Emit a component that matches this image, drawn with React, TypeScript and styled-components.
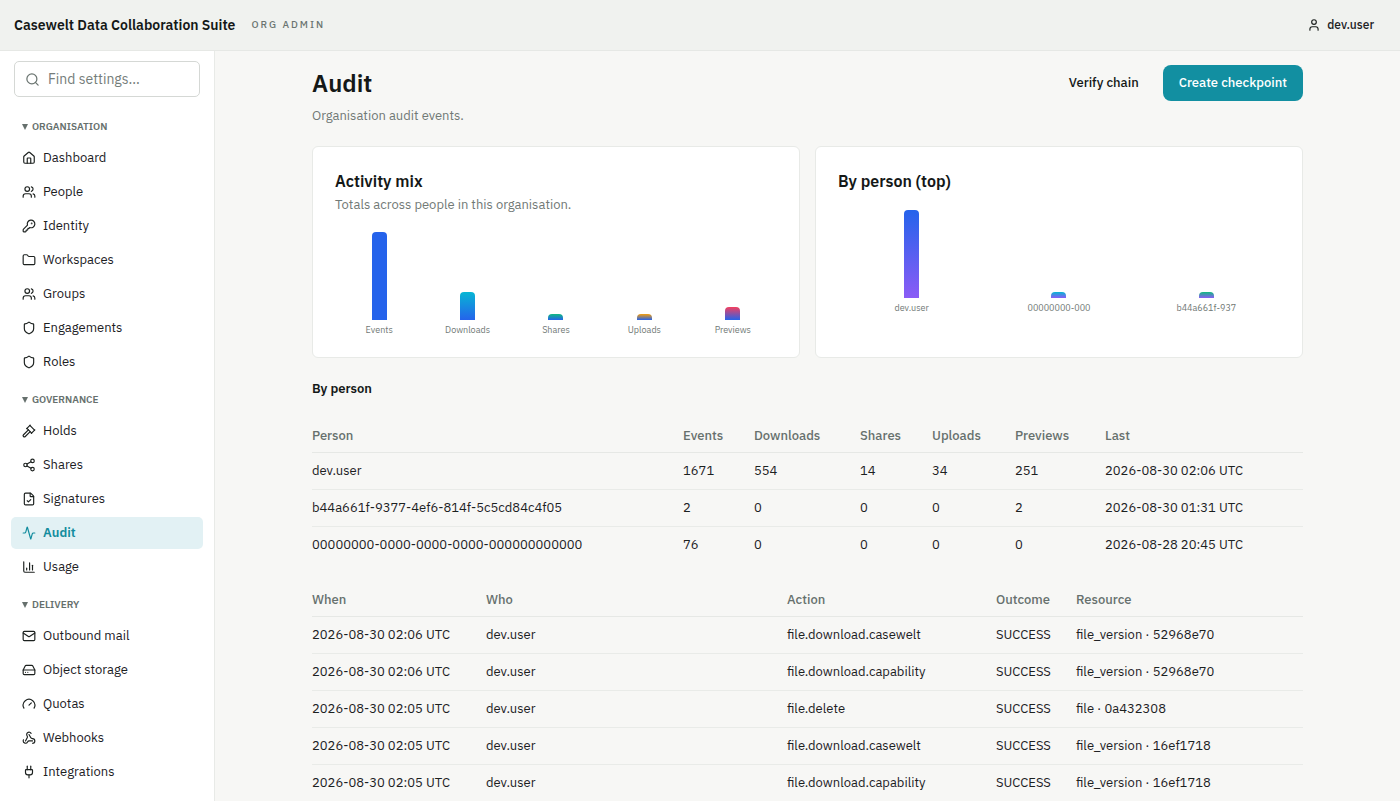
import {
  Activity,
  ChartColumn,
  FileCheck,
  Folder,
  Gauge,
  Gavel,
  HardDrive,
  House,
  KeyRound,
  Mail,
  Plug,
  Search,
  Share2,
  Shield,
  User,
  Users,
  Webhook,
  type LucideIcon,
} from "lucide-react";
import styled, { createGlobalStyle } from "styled-components";

const GlobalStyle = createGlobalStyle`
  * {
    box-sizing: border-box;
  }

  body {
    margin: 0;
    background-color: #f7f7f5;
    color: #1c211f;
    font-family: "IBM Plex Sans", Inter, "Liberation Sans", sans-serif;
    font-size: 13px;
    line-height: 20px;
  }
`;

const Page = styled.div`
  display: flex;
  flex-direction: column;
  height: 100vh;
  overflow: hidden;
`;

const TopBar = styled.header`
  flex: none;
  display: flex;
  justify-content: space-between;
  align-items: center;
  height: 51px;
  padding: 0 26px 0 14px;
  background-color: #f0f2ef;
  border-bottom: 1px solid #e6e8e5;
`;

const Brand = styled.div`
  display: flex;
  align-items: center;
  gap: 16px;
`;

const BrandName = styled.span`
  font-size: 14px;
  font-weight: 600;
  color: #141817;
`;

const BrandRole = styled.span`
  font-size: 10px;
  font-weight: 500;
  letter-spacing: 2px;
  text-transform: uppercase;
  color: #6b7571;
`;

const UserButton = styled.button`
  display: flex;
  align-items: center;
  gap: 6px;
  padding: 0;
  border: 0;
  background: none;
  color: #1c211f;
  font: inherit;
  font-size: 12px;
  font-weight: 500;
  cursor: pointer;
`;

const Body = styled.div`
  flex: 1;
  display: flex;
  min-height: 0;
`;

const Sidebar = styled.nav`
  flex: none;
  width: 215px;
  padding: 10px 11px;
  overflow: hidden;
  background-color: #fff;
  border-right: 1px solid #e8eae7;
`;

const SearchBox = styled.label`
  display: flex;
  align-items: center;
  gap: 8px;
  height: 36px;
  margin: 0 3px 20px;
  padding: 0 10px;
  border: 1px solid #d5d8d5;
  border-radius: 5px;
  color: #6b7571;
`;

const SearchInput = styled.input`
  flex: 1;
  min-width: 0;
  padding: 0;
  border: 0;
  outline: 0;
  background: none;
  font: inherit;
  font-size: 14px;
  color: #1c211f;

  &::placeholder {
    color: #757d7a;
    opacity: 1;
  }
`;

const Group = styled.details`
  margin-bottom: 12px;
`;

const GroupTitle = styled.summary`
  display: flex;
  align-items: center;
  gap: 4px;
  height: 20px;
  margin-bottom: 5px;
  padding: 0 11px;
  list-style: none;
  font-size: 10px;
  font-weight: 600;
  text-transform: uppercase;
  color: #66706d;
  cursor: pointer;

  &::before {
    content: "";
    border: 3px solid transparent;
    border-top: 6px solid #66706d;
    border-bottom: 0;
  }
`;

const GroupItems = styled.div`
  display: flex;
  flex-direction: column;
  gap: 2px;
`;

const NavItem = styled.a<{ $active?: boolean }>`
  display: flex;
  align-items: center;
  gap: 7px;
  height: 32px;
  padding: 0 11px;
  border-radius: 5px;
  background-color: ${({ $active }) => ($active ? "#e2f1f4" : "transparent")};
  color: ${({ $active }) => ($active ? "#128c9e" : "#1c211f")};
  font-weight: ${({ $active }) => ($active ? 600 : 400)};
  text-decoration: none;
`;

const Main = styled.main`
  flex: 1;
  min-width: 0;
  padding: 14px 24px 0;
  overflow: hidden;
`;

const Content = styled.div`
  max-width: 991px;
  margin: 0 auto;
`;

const PageHeader = styled.div`
  display: flex;
  justify-content: space-between;
  align-items: flex-start;
  margin-bottom: 20px;
`;

const Title = styled.h1`
  margin: 3px 0 8px;
  font-size: 24px;
  font-weight: 600;
  line-height: 30px;
  color: #141817;
`;

const Muted = styled.p`
  margin: 0;
  color: #717976;
`;

const Actions = styled.div`
  display: flex;
  gap: 8px;
`;

const Button = styled.button<{ $primary?: boolean }>`
  height: 36px;
  padding: 0 16px;
  border: 0;
  border-radius: 8px;
  background-color: ${({ $primary }) => ($primary ? "#128fa1" : "transparent")};
  color: ${({ $primary }) => ($primary ? "#fff" : "#141817")};
  font: inherit;
  font-weight: 500;
  cursor: pointer;
`;

const Cards = styled.div`
  display: grid;
  grid-template-columns: 1fr 1fr;
  gap: 15px;
  margin-bottom: 21px;
`;

const Card = styled.section`
  padding: 22px 22px 21px;
  border: 1px solid #e8eae7;
  border-radius: 6px;
  background-color: #fff;
`;

const CardTitle = styled.h2`
  margin: 0 0 2px;
  font-size: 16px;
  font-weight: 600;
  line-height: 24px;
  color: #141817;
`;

const Chart = styled.div<{ $columns: number }>`
  display: grid;
  grid-template-columns: repeat(${({ $columns }) => $columns}, 1fr);
  margin-top: 17px;
`;

const ChartColumnBox = styled.div`
  display: flex;
  flex-direction: column;
  align-items: center;
`;

const BarTrack = styled.div`
  display: flex;
  align-items: flex-end;
  height: 88px;
`;

const Bar = styled.div<{ $from: string; $to: string }>`
  width: 15px;
  min-height: 6px;
  border-radius: 4px 4px 0 0;
  background: linear-gradient(${({ $from, $to }) => `${$from}, ${$to}`});
`;

const BarLabel = styled.span`
  margin-top: 4px;
  font-size: 9px;
  line-height: 12px;
  color: #717976;
`;

const SectionTitle = styled.h3`
  margin: 0 0 20px;
  font-size: 13px;
  font-weight: 600;
  line-height: 20px;
  color: #141817;
`;

const Table = styled.table`
  width: 100%;
  margin-bottom: 19px;
  border-collapse: separate;
  border-spacing: 0;
  table-layout: fixed;

  &:last-child {
    margin-bottom: 0;
  }
`;

const Th = styled.th<{ $width?: number }>`
  width: ${({ $width }) => ($width ? `${$width}px` : "auto")};
  height: 34px;
  padding: 0;
  border-bottom: 1px solid #e6e8e5;
  text-align: left;
  font-weight: 500;
  color: #66706d;
`;

const Td = styled.td<{ $line: boolean }>`
  height: 37px;
  padding: 0;
  border-bottom: 1px solid ${({ $line }) => ($line ? "#e9ebe8" : "transparent")};
  white-space: nowrap;
`;

const groups: { title: string; items: [string, LucideIcon][] }[] = [
  {
    title: "Organisation",
    items: [
      ["Dashboard", House],
      ["People", Users],
      ["Identity", KeyRound],
      ["Workspaces", Folder],
      ["Groups", Users],
      ["Engagements", Shield],
      ["Roles", Shield],
    ],
  },
  {
    title: "Governance",
    items: [
      ["Holds", Gavel],
      ["Shares", Share2],
      ["Signatures", FileCheck],
      ["Audit", Activity],
      ["Usage", ChartColumn],
    ],
  },
  {
    title: "Delivery",
    items: [
      ["Outbound mail", Mail],
      ["Object storage", HardDrive],
      ["Quotas", Gauge],
      ["Webhooks", Webhook],
      ["Integrations", Plug],
    ],
  },
];

interface Datum {
  label: string;
  value: number;
  color: string;
}

const activity: Datum[] = [
  { label: "Events", value: 1749, color: "#2563eb" },
  { label: "Downloads", value: 554, color: "#06b6d4" },
  { label: "Shares", value: 14, color: "#10b981" },
  { label: "Uploads", value: 34, color: "#f59e0b" },
  { label: "Previews", value: 253, color: "#f43f5e" },
];

const topPeople: Datum[] = [
  { label: "dev.user", value: 1671, color: "#2563eb" },
  { label: "00000000-000", value: 76, color: "#06b6d4" },
  { label: "b44a661f-937", value: 2, color: "#10b981" },
];

interface Column {
  name: string;
  width?: number;
}

const personColumns: Column[] = [
  { name: "Person" },
  { name: "Events", width: 71 },
  { name: "Downloads", width: 106 },
  { name: "Shares", width: 72 },
  { name: "Uploads", width: 83 },
  { name: "Previews", width: 90 },
  { name: "Last", width: 198 },
];

const personRows = [
  ["dev.user", "1671", "554", "14", "34", "251", "2026-08-30 02:06 UTC"],
  ["b44a661f-9377-4ef6-814f-5c5cd84c4f05", "2", "0", "0", "0", "2", "2026-08-30 01:31 UTC"],
  ["00000000-0000-0000-0000-000000000000", "76", "0", "0", "0", "0", "2026-08-28 20:45 UTC"],
];

const eventColumns: Column[] = [
  { name: "When", width: 174 },
  { name: "Who" },
  { name: "Action", width: 209 },
  { name: "Outcome", width: 80 },
  { name: "Resource", width: 227 },
];

const eventRows = [
  ["2026-08-30 02:06 UTC", "dev.user", "file.download.casewelt", "SUCCESS", "file_version · 52968e70"],
  ["2026-08-30 02:06 UTC", "dev.user", "file.download.capability", "SUCCESS", "file_version · 52968e70"],
  ["2026-08-30 02:05 UTC", "dev.user", "file.delete", "SUCCESS", "file · 0a432308"],
  ["2026-08-30 02:05 UTC", "dev.user", "file.download.casewelt", "SUCCESS", "file_version · 16ef1718"],
  ["2026-08-30 02:05 UTC", "dev.user", "file.download.capability", "SUCCESS", "file_version · 16ef1718"],
];

const BarChart: React.FC<{ data: Datum[]; base: string }> = ({ data, base }) => {
  const max = Math.max(...data.map((d) => d.value));

  return (
    <Chart $columns={data.length}>
      {data.map((d) => (
        <ChartColumnBox key={d.label}>
          <BarTrack>
            <Bar $from={d.color} $to={base} style={{ height: `${(d.value / max) * 100}%` }} />
          </BarTrack>
          <BarLabel>{d.label}</BarLabel>
        </ChartColumnBox>
      ))}
    </Chart>
  );
};

const DataTable: React.FC<{ columns: Column[]; rows: string[][]; lastLine?: boolean }> = ({
  columns,
  rows,
  lastLine = false,
}) => (
  <Table>
    <thead>
      <tr>
        {columns.map((c) => (
          <Th key={c.name} scope="col" $width={c.width}>
            {c.name}
          </Th>
        ))}
      </tr>
    </thead>
    <tbody>
      {rows.map((row, i) => (
        <tr key={i}>
          {row.map((cell, j) => (
            <Td key={j} $line={lastLine || i < rows.length - 1}>
              {cell}
            </Td>
          ))}
        </tr>
      ))}
    </tbody>
  </Table>
);

const App: React.FC = () => {
  return (
    <Page>
      <GlobalStyle />
      <TopBar>
        <Brand>
          <BrandName>Casewelt Data Collaboration Suite</BrandName>
          <BrandRole>Org admin</BrandRole>
        </Brand>
        <UserButton type="button">
          <User size={14} />
          dev.user
        </UserButton>
      </TopBar>
      <Body>
        <Sidebar>
          <SearchBox>
            <Search size={15} />
            <SearchInput type="text" placeholder="Find settings..." aria-label="Find settings" />
          </SearchBox>
          {groups.map((group) => (
            <Group key={group.title} open>
              <GroupTitle>{group.title}</GroupTitle>
              <GroupItems>
                {group.items.map(([label, Icon]) => (
                  <NavItem key={label} href="#" $active={label === "Audit"}>
                    <Icon size={14} />
                    {label}
                  </NavItem>
                ))}
              </GroupItems>
            </Group>
          ))}
        </Sidebar>
        <Main>
          <Content>
            <PageHeader>
              <div>
                <Title>Audit</Title>
                <Muted>Organisation audit events.</Muted>
              </div>
              <Actions>
                <Button type="button">Verify chain</Button>
                <Button type="button" $primary>
                  Create checkpoint
                </Button>
              </Actions>
            </PageHeader>
            <Cards>
              <Card>
                <CardTitle>Activity mix</CardTitle>
                <Muted>Totals across people in this organisation.</Muted>
                <BarChart data={activity} base="#2563eb" />
              </Card>
              <Card>
                <CardTitle>By person (top)</CardTitle>
                <BarChart data={topPeople} base="#8b5cf6" />
              </Card>
            </Cards>
            <SectionTitle>By person</SectionTitle>
            <DataTable columns={personColumns} rows={personRows} />
            <DataTable columns={eventColumns} rows={eventRows} lastLine />
          </Content>
        </Main>
      </Body>
    </Page>
  );
};

export default App;
